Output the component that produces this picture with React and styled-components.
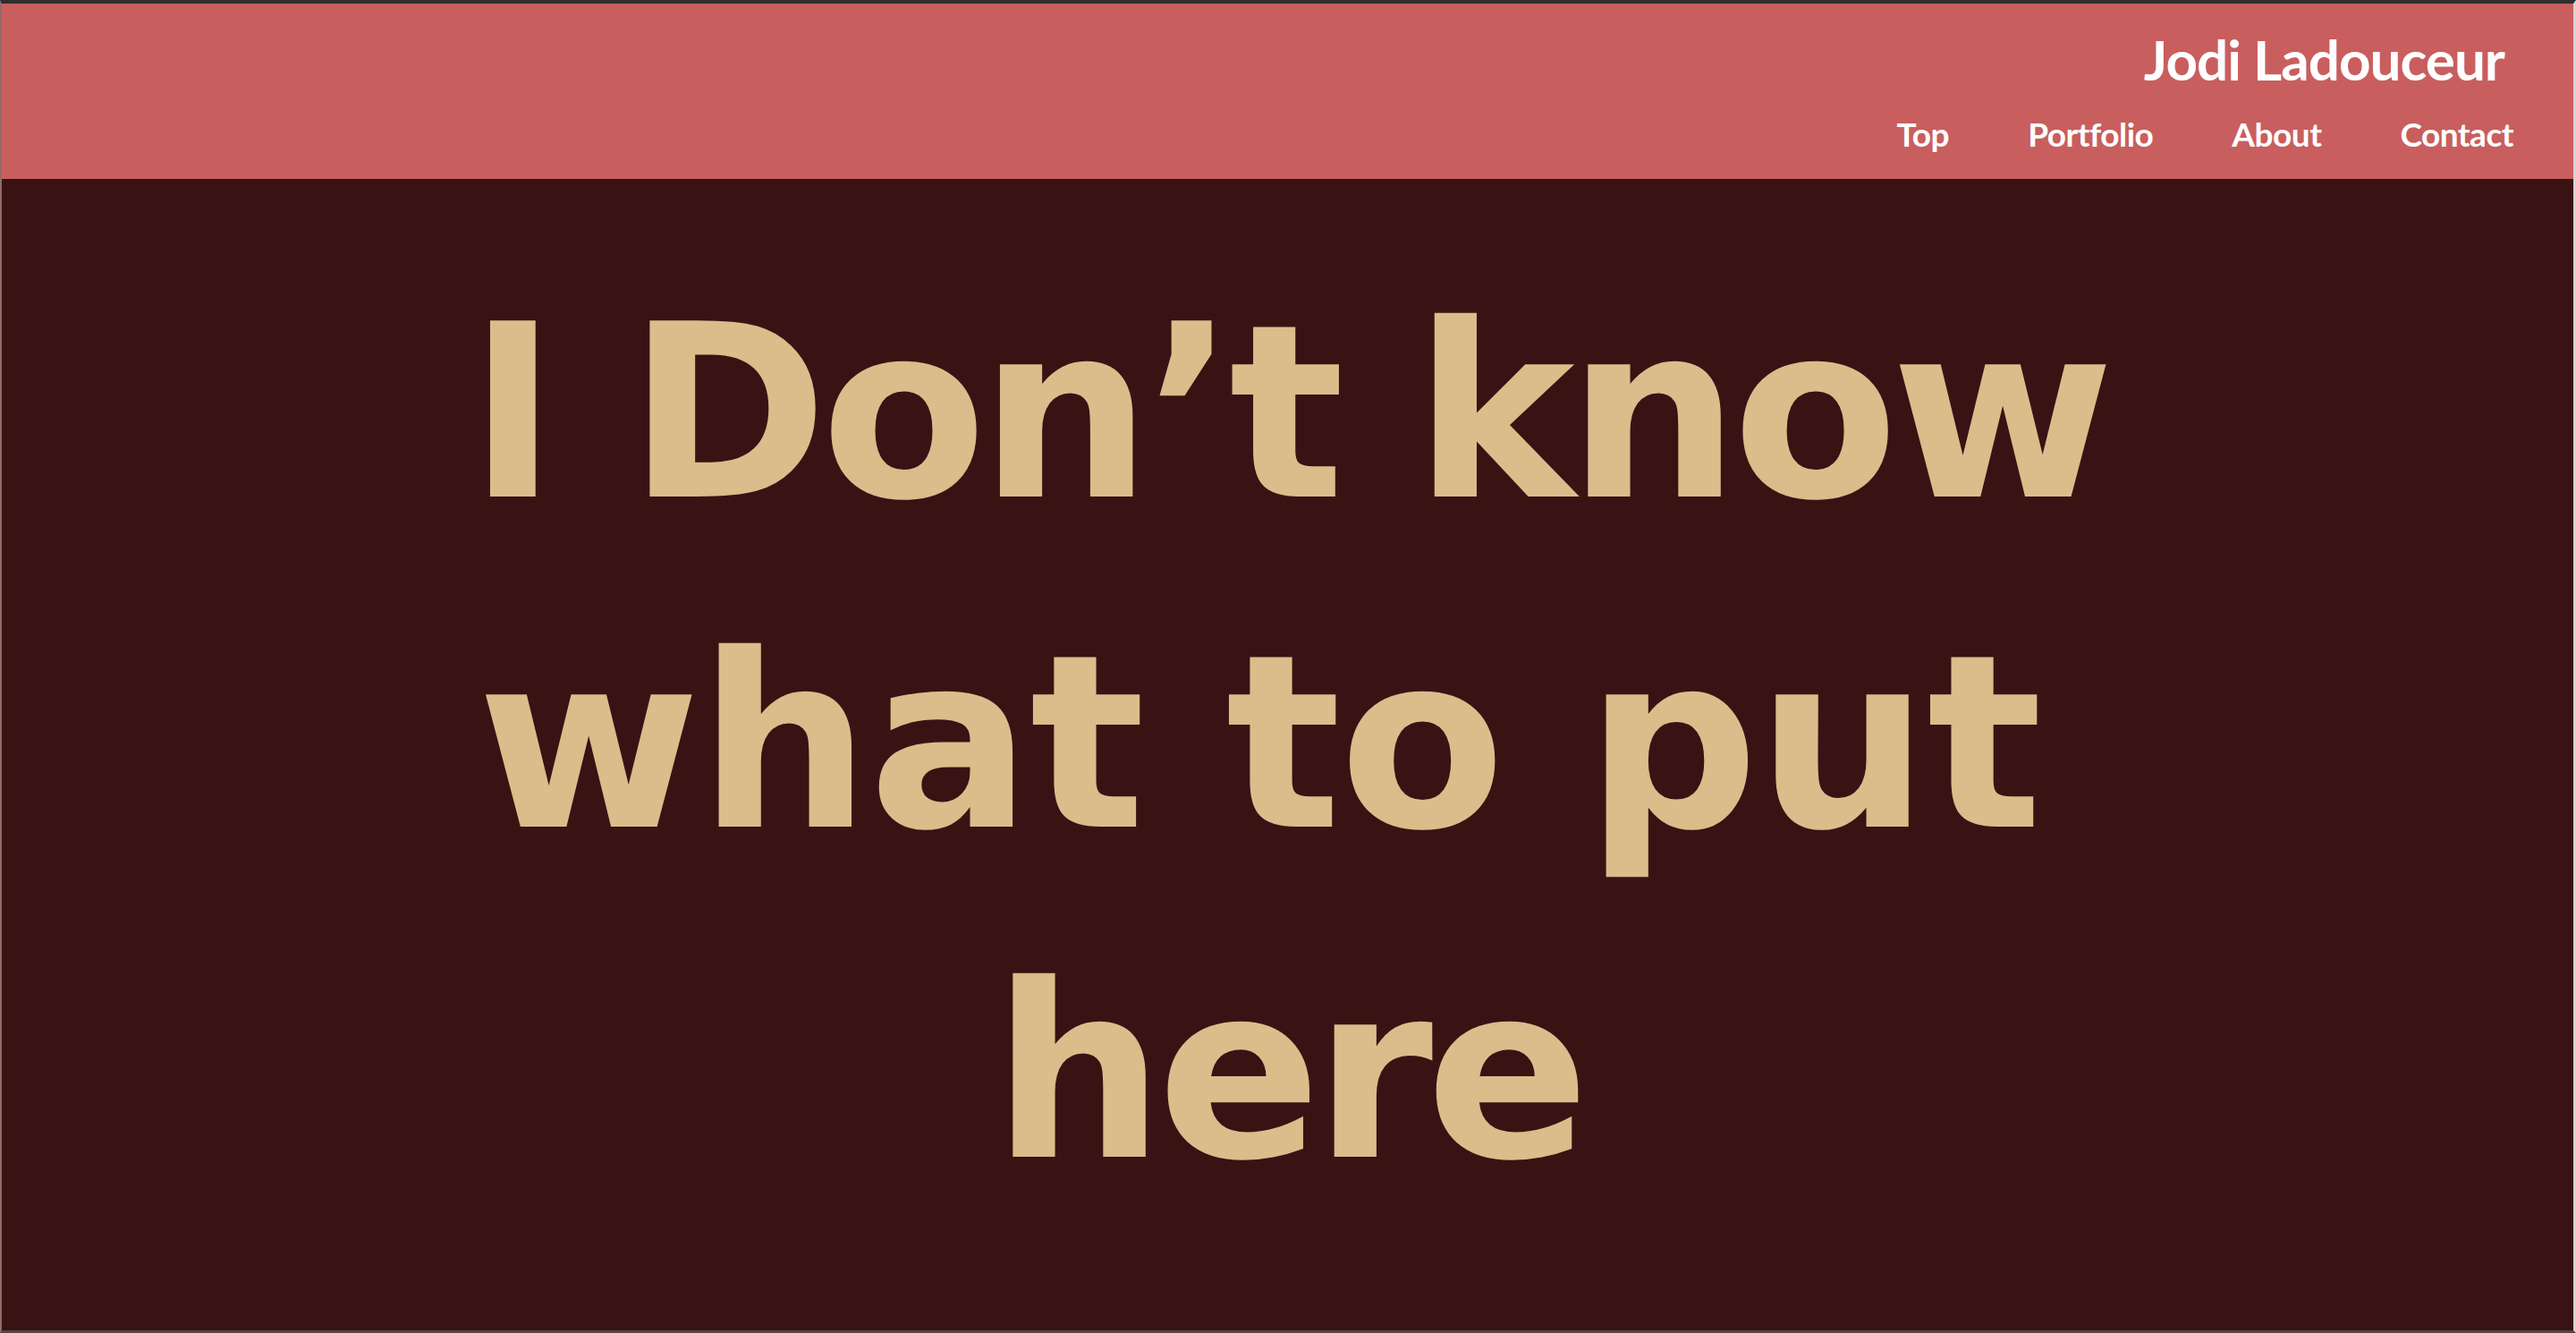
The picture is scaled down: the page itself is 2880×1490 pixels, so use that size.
import React from "react";
import styled, { createGlobalStyle } from "styled-components";

const GlobalStyle = createGlobalStyle`
    html, body {
        margin: 0;
        padding: 0;
        background: #2e2e2e;
    }
    * {
        box-sizing: border-box;
    }
`;

function App() {
    return (
        <>
            <GlobalStyle />
            <Frame>
                <Header>
                    <Name>Jodi Ladouceur</Name>
                    <Nav>
                        <NavLink href="#top">Top</NavLink>
                        <NavLink href="#portfolio">Portfolio</NavLink>
                        <NavLink href="#about">About</NavLink>
                        <NavLink href="#contact">Contact</NavLink>
                    </Nav>
                </Header>
                <Hero>
                    <Headline>
                        <Line>I Don’t know</Line>
                        <Line $trail>what to put</Line>
                        <Line>here</Line>
                    </Headline>
                </Hero>
            </Frame>
        </>
    );
}

// Styled components
const Frame = styled.div`
    height: 100vh;
    display: flex;
    flex-direction: column;
    border-top: 4px solid #2e2e2e;
    border-left: 2px solid #8f6a6a;
    border-right: 3px solid #d9d2d2;
    border-bottom: 3px solid #5b4244;
    background: #3a1214;
    overflow: hidden;
`;
const Header = styled.header`
    height: 196px;
    background: #c95e5e;
    display: flex;
    flex-direction: column;
    align-items: flex-end;
    padding: 22px 67px 0 0;
    font-family: "Lato", "Noto Sans", sans-serif;
    color: #ffffff;
`;
const Name = styled.h1`
    margin: 0 10px 0 0;
    font-size: 62px;
    font-weight: 700;
    line-height: 80px;
    letter-spacing: -1px;
`;
const Nav = styled.nav`
    display: flex;
    gap: 88px;
    margin-top: 20px;
`;
const NavLink = styled.a`
    color: #ffffff;
    text-decoration: none;
    font-size: 37px;
    font-weight: 700;
    line-height: 48px;
    letter-spacing: -0.5px;
`;
const Hero = styled.main`
    flex: 1;
    display: flex;
    justify-content: center;
    padding-top: 77px;
`;
const Headline = styled.h2`
    margin: 0;
    text-align: center;
    font-family: "DejaVu Sans", "Lato", sans-serif;
    font-weight: 700;
    font-size: 270px;
    line-height: 369px;
    letter-spacing: -8px;
    color: #dbbc8b;
`;
const Line = styled.span`
    display: block;
    padding-right: ${(props) => (props.$trail ? "64px" : "0")};
    letter-spacing: ${(props) => (props.$trail ? "-2px" : "-8px")};
`;

export default App;
